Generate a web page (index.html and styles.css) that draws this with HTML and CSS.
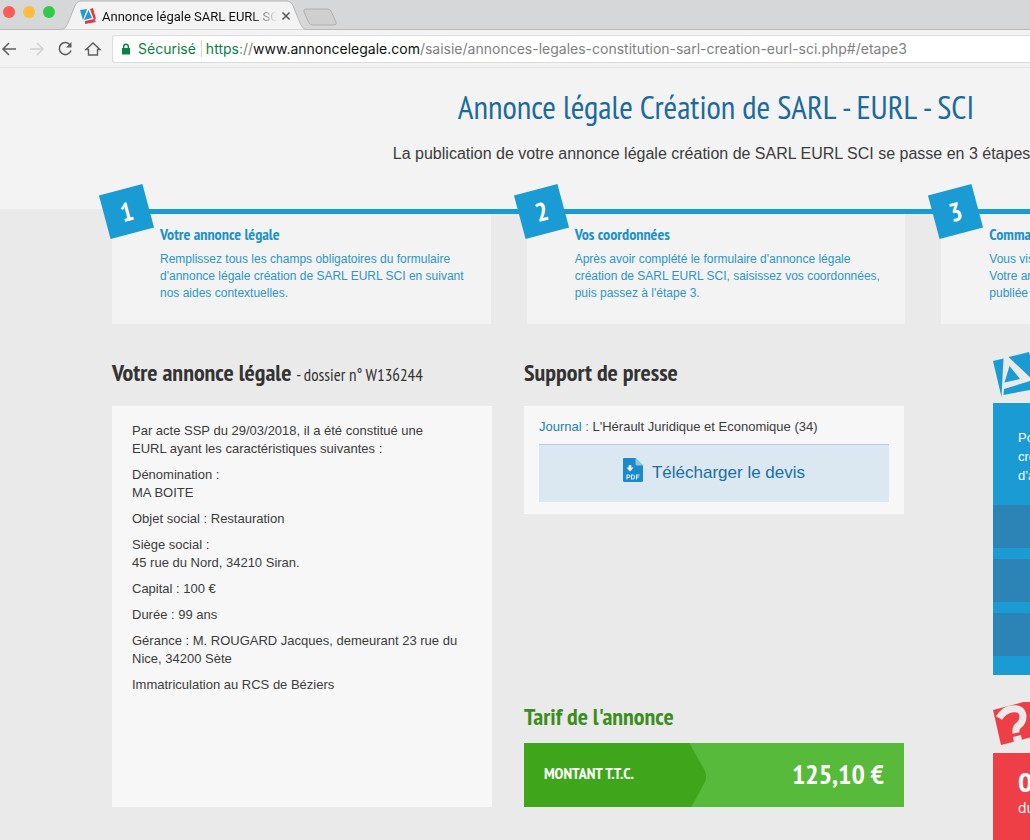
FILE: index.html
```html
<!DOCTYPE html>
<html lang="fr">
<head>
<meta charset="utf-8">
<title>Annonce légale SARL EURL SCI</title>
<link rel="stylesheet" href="styles.css">
</head>
<body>
<div class="browser">
  <div class="tabstrip">
    <div class="lights"><span class="light red"></span><span class="light yellow"></span><span class="light green"></span></div>
    <div class="tab">
      <svg class="tab-shape" viewBox="0 0 248 30" preserveAspectRatio="none" aria-hidden="true"><path d="M0 30C5 28 5 27 7 23L14 6Q16 1 21 1H227Q232 1 234 6L241 23C243 27 243 28 248 30Z" fill="#f3f3f3" stroke="#b5b5b5"/></svg>
      <svg class="favicon" viewBox="0 0 16 16" aria-hidden="true"><path d="M0 2L7 1 3 12Z" fill="#2499d0"/><path d="M10 1L13 0 16 11 14 12Z" fill="#e23b3f"/><path d="M8.500 2L12 10 4 12Z" fill="#2499d0"/><path d="M5 13L14 11 16 14 5 16Z" fill="#e23b3f"/></svg>
      <span class="tab-title">Annonce légale SARL EURL SCI</span>
      <button class="tab-close" aria-label="Fermer l'onglet"><svg viewBox="0 0 10 10"><path d="M1.500 1.500L8.500 8.500M8.500 1.500L1.500 8.500" stroke="#555" stroke-width="1.500"/></svg></button>
    </div>
    <button class="new-tab" aria-label="Nouvel onglet"><svg viewBox="0 0 36 18"><path d="M4 1H25Q28 1 29 3L34 14Q35 17 32 17H11Q8 17 7 15L2 4Q1 1 4 1Z" fill="#cfcfcf" stroke="#b0b0b0"/></svg></button>
  </div>
  <div class="toolbar">
    <button class="nav-btn" aria-label="Précédent"><svg viewBox="0 0 18 18"><path d="M16 9H3M9 3L3 9L9 15" fill="none" stroke="#5f5f5f" stroke-width="1.500"/></svg></button>
    <button class="nav-btn" aria-label="Suivant" disabled><svg viewBox="0 0 18 18"><path d="M2 9H15M9 3L15 9L9 15" fill="none" stroke="#d0d0d0" stroke-width="1.500"/></svg></button>
    <button class="nav-btn" aria-label="Actualiser"><svg viewBox="0 0 18 18"><path d="M14.300 5.200A6 6 0 1 0 15 10.500" fill="none" stroke="#5f5f5f" stroke-width="1.600"/><path d="M15.500 2V7.500H10Z" fill="#5f5f5f"/></svg></button>
    <button class="nav-btn" aria-label="Accueil"><svg viewBox="0 0 18 18"><path d="M2 9.500L9 3L16 9.500H13.500V15H4.500V9.500Z" fill="none" stroke="#5f5f5f" stroke-width="1.400"/></svg></button>
    <div class="address" role="textbox" aria-label="Adresse" contenteditable="true" spellcheck="false"><svg class="lock" viewBox="0 0 10 12" aria-hidden="true"><path d="M1 5H9V11.500H1Z" fill="#0b8043"/><path d="M2.700 5.500V3.500A2.300 2.300 0 0 1 7.300 3.500V5.500" fill="none" stroke="#0b8043" stroke-width="1.400"/></svg><span class="secure">Sécurisé</span><span class="url"><span class="scheme">https</span>://<span class="host">www.annoncelegale.com</span>/saisie/annonces-legales-constitution-sarl-creation-eurl-sci.php#/etape3</span></div>
  </div>
</div>

<div class="viewport">
<div class="page">
  <header class="hero">
    <h1>Annonce légale Création de SARL - EURL - SCI</h1>
    <p>La publication de votre annonce légale création de SARL EURL SCI se passe en 3 étapes :</p>
  </header>
  <div class="container">
    <ol class="steps">
      <li class="step"><span class="badge">1</span><h2>Votre annonce légale</h2><p>Remplissez tous les champs obligatoires du formulaire d'annonce légale création de SARL EURL SCI en suivant nos aides contextuelles.</p></li>
      <li class="step"><span class="badge">2</span><h2>Vos coordonnées</h2><p>Après avoir complété le formulaire d'annonce légale création de SARL EURL SCI, saisissez vos coordonnées, puis passez à l'étape 3.</p></li>
      <li class="step"><span class="badge">3</span><h2>Commande</h2><p>Vous visualisez<br>Votre annonce<br>publiée</p></li>
    </ol>
    <div class="columns">
      <main class="main">
        <section class="column">
          <h2 class="title">Votre annonce légale <small>- dossier n° W136244</small></h2>
          <div class="card notice">
            <p>Par acte SSP du 29/03/2018, il a été constitué une EURL ayant les caractéristiques suivantes :</p>
            <p>Dénomination :<br>MA BOITE</p>
            <p>Objet social : Restauration</p>
            <p>Siège social :<br>45 rue du Nord, 34210 Siran.</p>
            <p>Capital : 100 €</p>
            <p>Durée : 99 ans</p>
            <p>Gérance : M. ROUGARD Jacques, demeurant 23 rue du Nice, 34200 Sète</p>
            <p>Immatriculation au RCS de Béziers</p>
          </div>
        </section>
        <div class="column">
          <section>
            <h2 class="title">Support de presse</h2>
            <div class="card press">
              <p><span class="label">Journal :</span> L'Hérault Juridique et Economique (34)</p>
              <a class="download" href="#devis"><svg class="pdf" viewBox="0 0 20 24" aria-hidden="true"><path d="M1 0H12.500L20 7.500V22.500Q20 24 18.500 24H1.500Q0 24 0 22.500V1Q0 0 1 0Z" fill="#1a8ac8"/><path d="M12.500 0L20 7.500H14Q12.500 7.500 12.500 6Z" fill="#8fc4e2"/><path d="M5.800 7H8.200V9.500H10.500L7 13.500L3.500 9.500H5.800Z" fill="#fff"/><path d="M4 21.500V17H5.500Q7 17 7 18.200T5.500 19.500H4M8.500 17V21H9.800Q11.500 21 11.500 19T9.800 17ZM13.500 21.500V17H16.500M13.500 19H16" fill="none" stroke="#d8ebf6" stroke-width="1.100"/></svg>Télécharger le devis</a>
            </div>
          </section>
          <section class="tarif">
            <h2 class="title green-title">Tarif de l'annonce</h2>
            <div class="price"><svg class="arrow" viewBox="0 0 182 64" preserveAspectRatio="none" aria-hidden="true"><path d="M0 0H165L179 25Q184 33 180 40L167 64H0Z" fill="#3fa61c"/></svg><span class="price-label">MONTANT T.T.C.</span><strong>125,10 €</strong></div>
          </section>
        </div>
      </main>
      <aside class="sidebar">
        <svg class="side-icon" viewBox="0 0 66 46" aria-hidden="true"><path d="M0 9L10.500 6.500L8.500 45Z" fill="#1a9bd4"/><path d="M15.500 5L36 0L46 34L41 29Z" fill="#1a9bd4"/><path d="M16.500 14L27 27L11.500 30.500Z" fill="#1a9bd4"/><path d="M11 37L37 29L42 37L10.500 43Z" fill="#1a9bd4"/></svg>
        <div class="box blue-box">
          <p>Pour<br>créer<br>d’annonce</p>
          <ul class="links"><li></li><li></li><li></li></ul>
        </div>
        <svg class="side-icon help" viewBox="0 0 66 46" aria-hidden="true"><path d="M0 8L38 -2L47 33L8 43Z" fill="#ee3f46"/><path d="M6 16Q10 9 18 7Q29 5 30 14Q30 20 26 23Q22 26 23 31" fill="none" stroke="#eaeaea" stroke-width="7"/><path d="M20 35L28 33L29 39L21 41Z" fill="#eaeaea"/></svg>
        <div class="box red-box"><strong>0</strong><p>du</p></div>
      </aside>
    </div>
  </div>
</div>
</div>
</body>
</html>
```
FILE: styles.css
```css
* { box-sizing: border-box; }
body {
  margin: 0;
  height: 100vh;
  overflow: hidden;
  background: #eaeaea;
  color: #3c3c3c;
  font-family: "Liberation Sans", Arial, sans-serif;
  display: flex;
  flex-direction: column;
}
h1, h2, p, ol, ul { margin: 0; padding: 0; font-weight: normal; }
ol, ul { list-style: none; }
button { border: 0; padding: 0; background: none; display: flex; align-items: center; justify-content: center; }
h1, h2, .badge, .price { font-family: "PT Sans Narrow", "Liberation Sans Narrow", "Liberation Sans", sans-serif; }

.browser { flex: none; font-family: Roboto, sans-serif; }
.tabstrip { height: 30px; display: flex; background: #d6d7d8; border-bottom: 1px solid #b9b9b9; }
.lights { display: flex; gap: 8px; padding: 6px 6px 0 3px; }
.light { width: 12px; height: 12px; border-radius: 50%; }
.red { background: #fc5b57; }
.yellow { background: #fdbc40; }
.green { background: #30c94a; }
.tab { position: relative; width: 246px; height: 30px; display: flex; align-items: center; padding: 2px 16px 0 19px; }
.tab-shape { position: absolute; inset: 0; width: 100%; height: 100%; }
.favicon { position: relative; width: 16px; height: 16px; flex: none; }
.tab-title { position: relative; flex: 1; margin: 0 4px 0 6px; overflow: hidden; white-space: nowrap; font-size: 13px; color: #111; -webkit-mask-image: linear-gradient(90deg, #000 85%, transparent); mask-image: linear-gradient(90deg, #000 85%, transparent); }
.tab-close { position: relative; width: 10px; height: 10px; }
.tab-close svg { width: 10px; height: 10px; }
.new-tab { width: 36px; margin-left: -5px; padding-top: 5px; }
.new-tab svg { width: 36px; height: 18px; }
.toolbar { height: 38px; display: flex; align-items: center; gap: 10px; background: #f3f3f3; border-bottom: 1px solid #e4e4e4; }
.nav-btn { width: 18px; height: 18px; }
.nav-btn svg { width: 18px; height: 18px; }
.address { flex: 1; height: 28px; padding-left: 8px; display: flex; align-items: center; background: #fff; border: 1px solid #dcdcdc; border-right: 0; border-radius: 3px 0 0 3px; font-family: Inter, Roboto, sans-serif; font-size: 14px; white-space: nowrap; overflow: hidden; }
.lock { width: 10px; height: 12px; margin-right: 7px; flex: none; }
.secure { color: #0b8043; padding-right: 5px; border-right: 1px solid #d8d8d8; margin-right: 4px; }
.url { color: #808080; }
.scheme { color: #0b8043; }
.host { color: #111; }

.viewport { flex: 1; min-height: 0; overflow: hidden; }
.page { min-width: 1432px; }
.hero { height: 141px; background: #f3f3f3; text-align: center; padding-top: 19px; }
.hero h1 { font-size: 33px; line-height: 40px; color: #1a6a9e; }
.hero p { margin-top: 16px; font-size: 16px; line-height: 22px; }
.container { width: 1208px; margin: 0 auto; }
.steps { display: grid; grid-template-columns: repeat(3, 1fr); gap: 36px; border-top: 5px solid #1a9bd0; }
.step { position: relative; min-height: 110px; padding: 9px 20px 22px 48px; background: #f3f3f3; color: #2c96c5; }
.step h2 { font-size: 16px; line-height: 22px; font-weight: bold; color: #1c92c8; }
.step p { margin-top: 6px; font-size: 12px; line-height: 17px; }
.badge { position: absolute; left: -8px; top: -25px; width: 45px; height: 45px; line-height: 45px; text-align: center; font-size: 26px; font-weight: bold; color: #fff; background: #1a9bd4; transform: rotate(-15deg); }

.columns { display: flex; align-items: flex-start; gap: 89px; padding-top: 28px; }
.main { display: grid; grid-template-columns: 380px 380px; gap: 32px; padding-top: 4px; }
.column { display: flex; flex-direction: column; }
.title { font-size: 24px; line-height: 34px; font-weight: bold; color: #333; }
.title small { font-size: 17px; line-height: 1; font-weight: normal; }
.card { margin-top: 16px; background: #f7f7f7; font-size: 13px; line-height: 18px; }
.notice { min-height: 401px; padding: 16px 32px 15px 20px; }
.notice p { margin-bottom: 8px; }
.press { padding: 12px 15px; }
.label { color: #1c80b5; }
.download { margin-top: 8px; height: 58px; display: flex; justify-content: center; align-items: center; gap: 9px; padding-bottom: 2px; background: #dbe8f1; border-top: 1px solid #b0cfe0; color: #1a6fa5; font-size: 17px; text-decoration: none; }
.pdf { width: 20px; height: 24px; margin-bottom: 6px; }
.tarif { margin-top: auto; }
.green-title { color: #3a8f1c; }
.price { position: relative; height: 64px; margin-top: 9px; padding: 0 20px 4px; display: flex; align-items: center; justify-content: space-between; background: #57ba3a; color: #fff; font-size: 28px; }
.arrow { position: absolute; left: 0; top: 0; width: 48%; height: 100%; }
.price-label { position: relative; font-size: 16px; font-weight: bold; }

.sidebar { flex: 1; }
.side-icon { display: block; width: 66px; height: 46px; }
.box { margin-top: 5px; padding: 25px 0 19px; color: #fff; }
.box p { padding-left: 25px; font-size: 13px; line-height: 19px; }
.blue-box { background: #1a9bd4; }
.links { display: grid; gap: 11px; margin-top: 20px; }
.links li { height: 43px; background: #2c84b6; }
.help { margin-top: 27px; }
.red-box { background: #ee3f46; min-height: 120px; padding-top: 13px; }
.box strong { padding-left: 25px; font: bold 26px/32px "Open Sans", sans-serif; }
.red-box p { font: 14px/20px "Open Sans", sans-serif; }
```
